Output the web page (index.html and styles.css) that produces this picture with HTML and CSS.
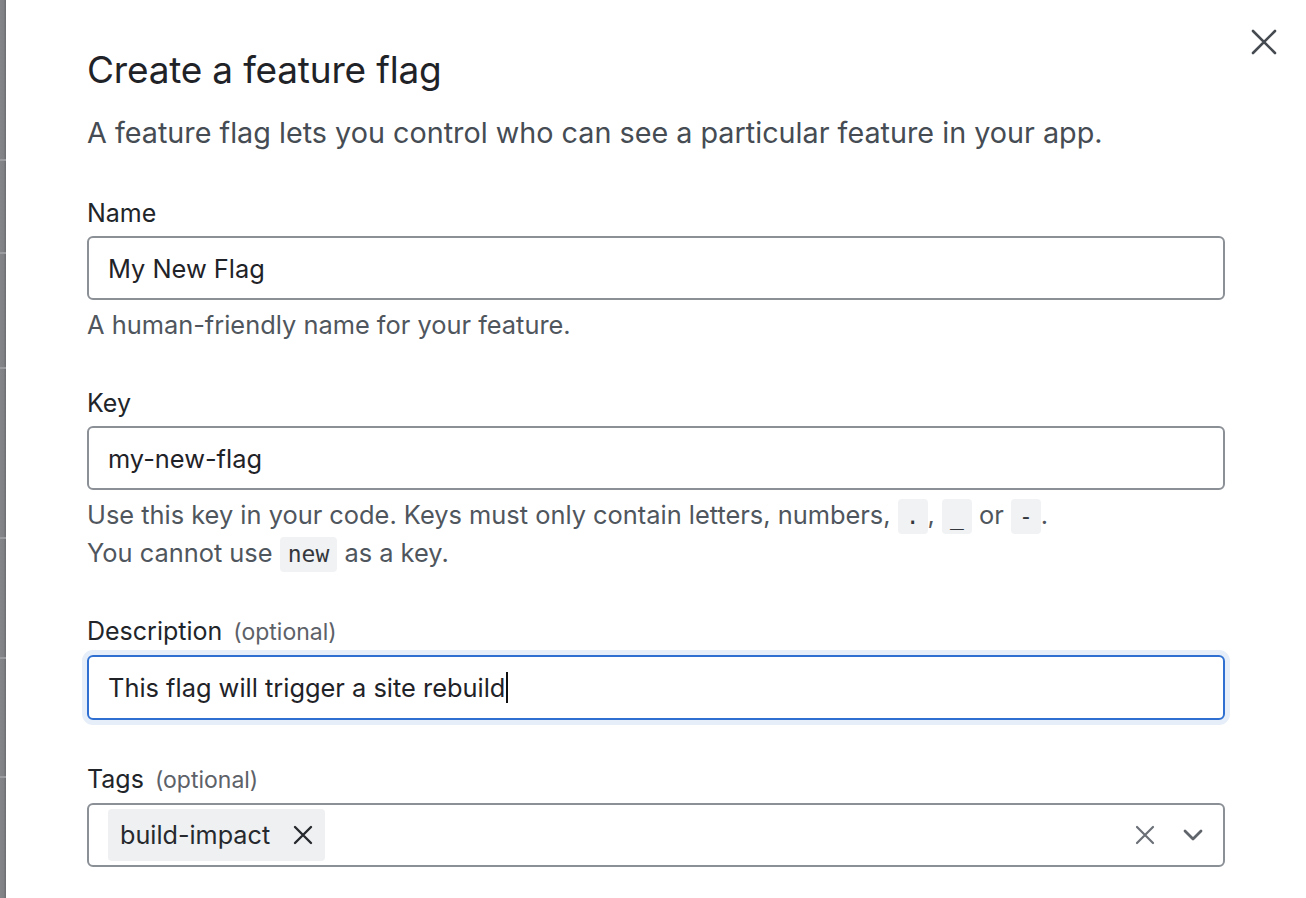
FILE: index.html
```html
<!DOCTYPE html>
<html lang="en">
<head>
<meta charset="utf-8">
<title>Create a feature flag</title>
<link rel="stylesheet" href="styles.css">
</head>
<body>
<div class="page">
  <div class="backdrop">
    <span class="bd-line l1"></span>
    <span class="bd-line l2"></span>
    <span class="bd-line l3"></span>
    <span class="bd-line l4"></span>
    <span class="bd-line l5"></span>
    <span class="bd-line l6"></span>
  </div>
  <div class="modal">
    <button class="close" aria-label="Close">
      <svg width="28" height="28" viewBox="0 0 28 28"><path d="M3 3 L25 25 M25 3 L3 25" stroke="#464b51" stroke-width="2.6" stroke-linecap="round" fill="none"/></svg>
    </button>
    <h1 class="title">Create a feature flag</h1>
    <p class="lead">A feature flag lets you control who can see a particular feature in your app.</p>

    <div class="field">
      <label class="label">Name</label>
      <div class="input"><span class="value">My New Flag</span></div>
      <p class="help">A human-friendly name for your feature.</p>
    </div>

    <div class="field field-key">
      <label class="label">Key</label>
      <div class="input"><span class="value">my-new-flag</span></div>
      <p class="help">Use this key in your code. Keys must only contain letters, numbers, <code class="code">.</code>, <code class="code">_</code> or <code class="code">-</code>.<br>You cannot use <code class="code">new</code> as a key.</p>
    </div>

    <div class="field">
      <label class="label">Description <span class="opt">(optional)</span></label>
      <div class="input focused"><span class="value">This flag will trigger a site rebuild</span><span class="caret"></span></div>
    </div>

    <div class="field">
      <label class="label">Tags <span class="opt">(optional)</span></label>
      <div class="input select">
        <span class="tag">build-impact
          <svg class="tag-x" width="20" height="20" viewBox="0 0 20 20"><path d="M2 2 L18 18 M18 2 L2 18" stroke="#26292d" stroke-width="2.4" stroke-linecap="round" fill="none"/></svg>
        </span>
        <span class="spacer"></span>
        <svg class="clear" width="20" height="20" viewBox="0 0 20 20"><path d="M2 2 L18 18 M18 2 L2 18" stroke="#6b7077" stroke-width="2.2" stroke-linecap="round" fill="none"/></svg>
        <svg class="chev" width="20" height="12" viewBox="0 0 20 12"><path d="M2 2 L10 10 L18 2" stroke="#60656c" stroke-width="2.8" stroke-linecap="round" stroke-linejoin="round" fill="none"/></svg>
      </div>
    </div>
  </div>
</div>
</body>
</html>
```

FILE: styles.css
```css
* { box-sizing: border-box; }
html, body { margin: 0; padding: 0; background: #ffffff; }
body {
  font-family: Inter, "Noto Sans", "Liberation Sans", sans-serif;
  color: #1f2328;
}
.page {
  display: flex;
  height: 898px;
  overflow: hidden;
}
.backdrop {
  position: relative;
  width: 6px;
  flex: 0 0 6px;
  background: linear-gradient(to right, #838588 0, #7f8184 60%, #6a6c6f 100%);
  box-shadow: 1px 0 3px rgba(0,0,0,0.22);
}
.bd-line {
  position: absolute;
  left: 0;
  width: 6px;
  height: 2px;
  background: #9a9c9f;
}
.l1 { top: 159px; }
.l2 { top: 252px; }
.l3 { top: 367px; }
.l4 { top: 537px; }
.l5 { top: 657px; }
.l6 { top: 776px; }
.modal {
  position: relative;
  flex: 1;
  padding: 50px 81px 0 81px;
  background: #fff;
}
.close {
  position: absolute;
  top: 28px;
  right: 28px;
  width: 28px;
  height: 28px;
  padding: 0;
  border: 0;
  background: none;
  display: flex;
}
.title {
  margin: 0;
  font-size: 37px;
  line-height: 40px;
  font-weight: 400;
  color: #1f2328;
  letter-spacing: -0.2px;
}
.lead {
  margin: 25px 0 0 0;
  font-size: 28.75px;
  line-height: 36px;
  color: #464c53;
}
.field { margin-top: 48px; }
.field + .field { margin-top: 45px; }
.field + .field-key { margin-top: 46px; }
.label {
  display: block;
  font-size: 25px;
  line-height: 28px;
  color: #212529;
  margin-bottom: 9px;
}
.opt {
  font-size: 23px;
  color: #5d6168;
  margin-left: 4px;
}
.input {
  height: 64px;
  border: 2px solid #8b9097;
  border-radius: 6px;
  display: flex;
  align-items: center;
  padding: 0 19px;
  font-size: 25.4px;
  color: #1f2328;
}
.input.focused {
  height: 65px;
  border-color: #2e6fd1;
  box-shadow: 0 0 0 5px #e6eef9;
}
.caret {
  display: inline-block;
  width: 2px;
  height: 31px;
  background: #111;
  margin-left: 1px;
}
.help {
  margin: 6px 0 0 0;
  font-size: 25.4px;
  line-height: 37px;
  color: #50565d;
}
.code {
  display: inline-block;
  font-family: "DejaVu Sans Mono", "Liberation Mono", monospace;
  font-size: 23px;
  line-height: 35px;
  background: #f1f2f4;
  border-radius: 4px;
  padding: 0 8px;
  color: #33373c;
}
.select { padding: 0 20px 0 19px; }
.tag {
  display: inline-flex;
  align-items: center;
  height: 52px;
  padding: 0 12px;
  background: #eff0f2;
  border-radius: 4px;
  font-size: 25.2px;
  color: #26292d;
  gap: 23px;
}
.spacer { flex: 1; }
.clear { margin-right: 28px; }
```
